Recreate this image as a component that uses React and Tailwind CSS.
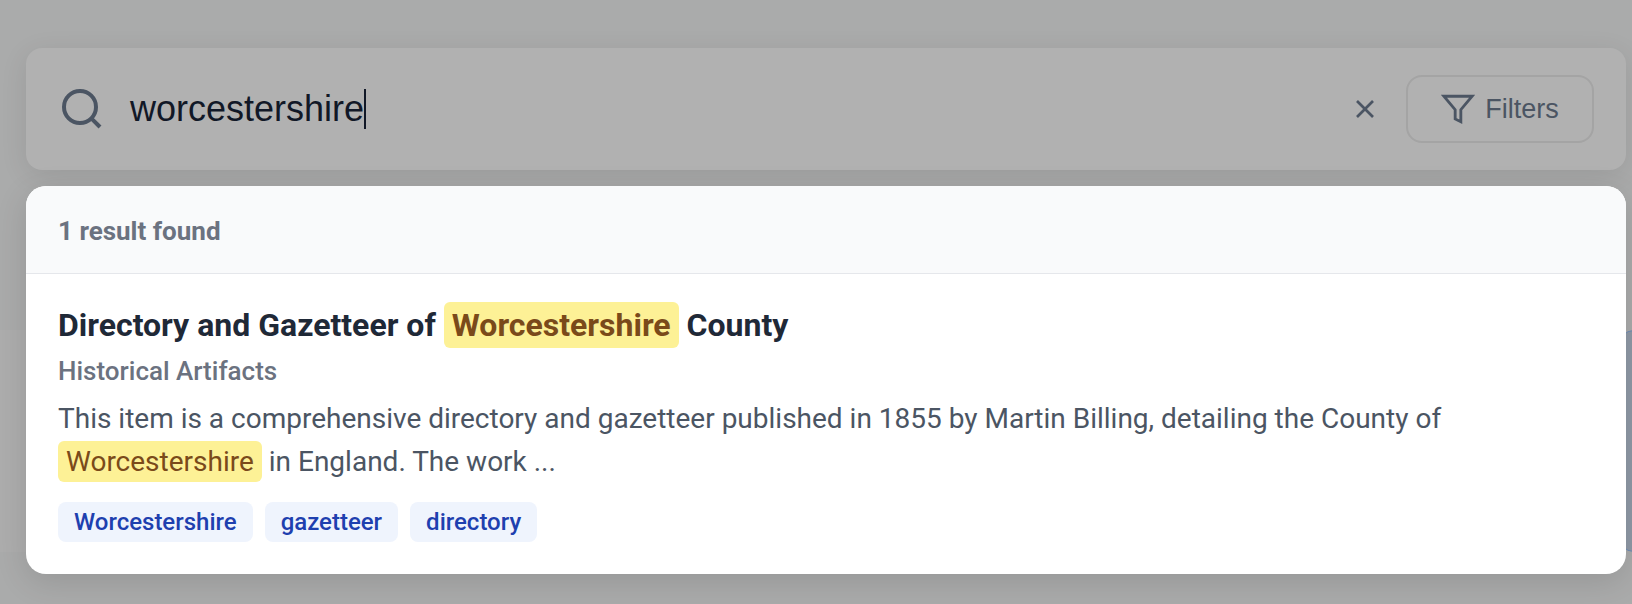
const sans = { fontFamily: "Roboto, sans-serif" };
const plain = { fontFamily: "'Liberation Sans', Arial, sans-serif" };

function Mark({ children }) {
  return <mark className="rounded-md bg-[#fdf196] px-2 py-1 text-[#7a4a1a]">{children}</mark>;
}

function Tag({ children }) {
  return (
    <span className="rounded-lg bg-[#eff4fd] px-4 py-[6px] text-[24px] leading-[28px] font-medium text-[#1e40af]">
      {children}
    </span>
  );
}

export default function App() {
  return (
    <div style={sans} className="relative h-[604px] w-[1632px] overflow-hidden bg-[#aaabab]">
      {/* page content behind the overlay */}
      <div className="absolute top-[330px] left-0 h-[222px] w-[1000px] bg-[#adadad]" />
      <div className="absolute top-[330px] left-[1618px] h-[222px] w-[200px] rounded-2xl border border-[#6f8db5] bg-[#8f99a6]" />

      <div className="relative flex flex-col gap-4 pt-12 pr-[6px] pl-[26px]">
        {/* Search bar */}
        <div className="flex h-[122px] items-center rounded-2xl bg-[#b1b1b1] pr-[32px] pl-[32px] shadow-[0_6px_28px_rgba(0,0,0,0.09)]">
          <svg width="48" height="48" viewBox="0 0 24 24" fill="none" stroke="#4b5563" strokeWidth="2">
            <circle cx="11" cy="11" r="8" />
            <line x1="21" y1="21" x2="16.65" y2="16.65" />
          </svg>
          <div style={plain} className="ml-[24px] flex flex-1 items-center text-[36px] leading-[40px] text-[#111827]">
            worcestershire
            <span className="h-[40px] w-[2px] bg-[#111827]" />
          </div>
          <svg width="32" height="32" viewBox="0 0 24 24" fill="none" stroke="#4b5563" strokeWidth="2" className="mr-[25px]">
            <line x1="18" y1="6" x2="6" y2="18" />
            <line x1="6" y1="6" x2="18" y2="18" />
          </svg>
          <button style={plain} className="flex h-[68px] w-[188px] items-center justify-center gap-[10px] rounded-2xl border-2 border-[#a4a4a4] text-[27px] text-[#4b5563]">
            <svg width="34" height="34" viewBox="0 0 24 24" fill="none" stroke="#4b5563" strokeWidth="2">
              <polygon points="22 3 2 3 10 12.46 10 19 14 21 14 12.46 22 3" />
            </svg>
            Filters
          </button>
        </div>

        {/* Results */}
        <div className="h-[388px] overflow-hidden rounded-[20px] bg-white shadow-[0_8px_32px_rgba(0,0,0,0.12)]">
          <div className="flex h-[88px] items-center border-b border-[#e5e7eb] bg-[#f9fafb] px-[32px] pt-1 text-[26px] font-bold text-[#6b7280]">
            1 result found
          </div>
          <div className="px-[32px] pt-[27px]">
            <div className="text-[32px] leading-[48px] font-bold text-[#1f2937]">
              Directory and Gazetteer of <Mark>Worcestershire</Mark> County
            </div>
            <div className="mt-1 text-[26px] leading-[36px] font-medium text-[#6b7280]">Historical Artifacts</div>
            <p className="mt-2 text-[28px] leading-[43px] text-[#4b5563]">
              This item is a comprehensive directory and gazetteer published in 1855 by Martin Billing, detailing the County of<br />
              <Mark>Worcestershire</Mark> in England. The work ...
            </p>
            <div className="mt-[19px] flex gap-3">
              <Tag>Worcestershire</Tag>
              <Tag>gazetteer</Tag>
              <Tag>directory</Tag>
            </div>
          </div>
        </div>
      </div>
    </div>
  );
}
